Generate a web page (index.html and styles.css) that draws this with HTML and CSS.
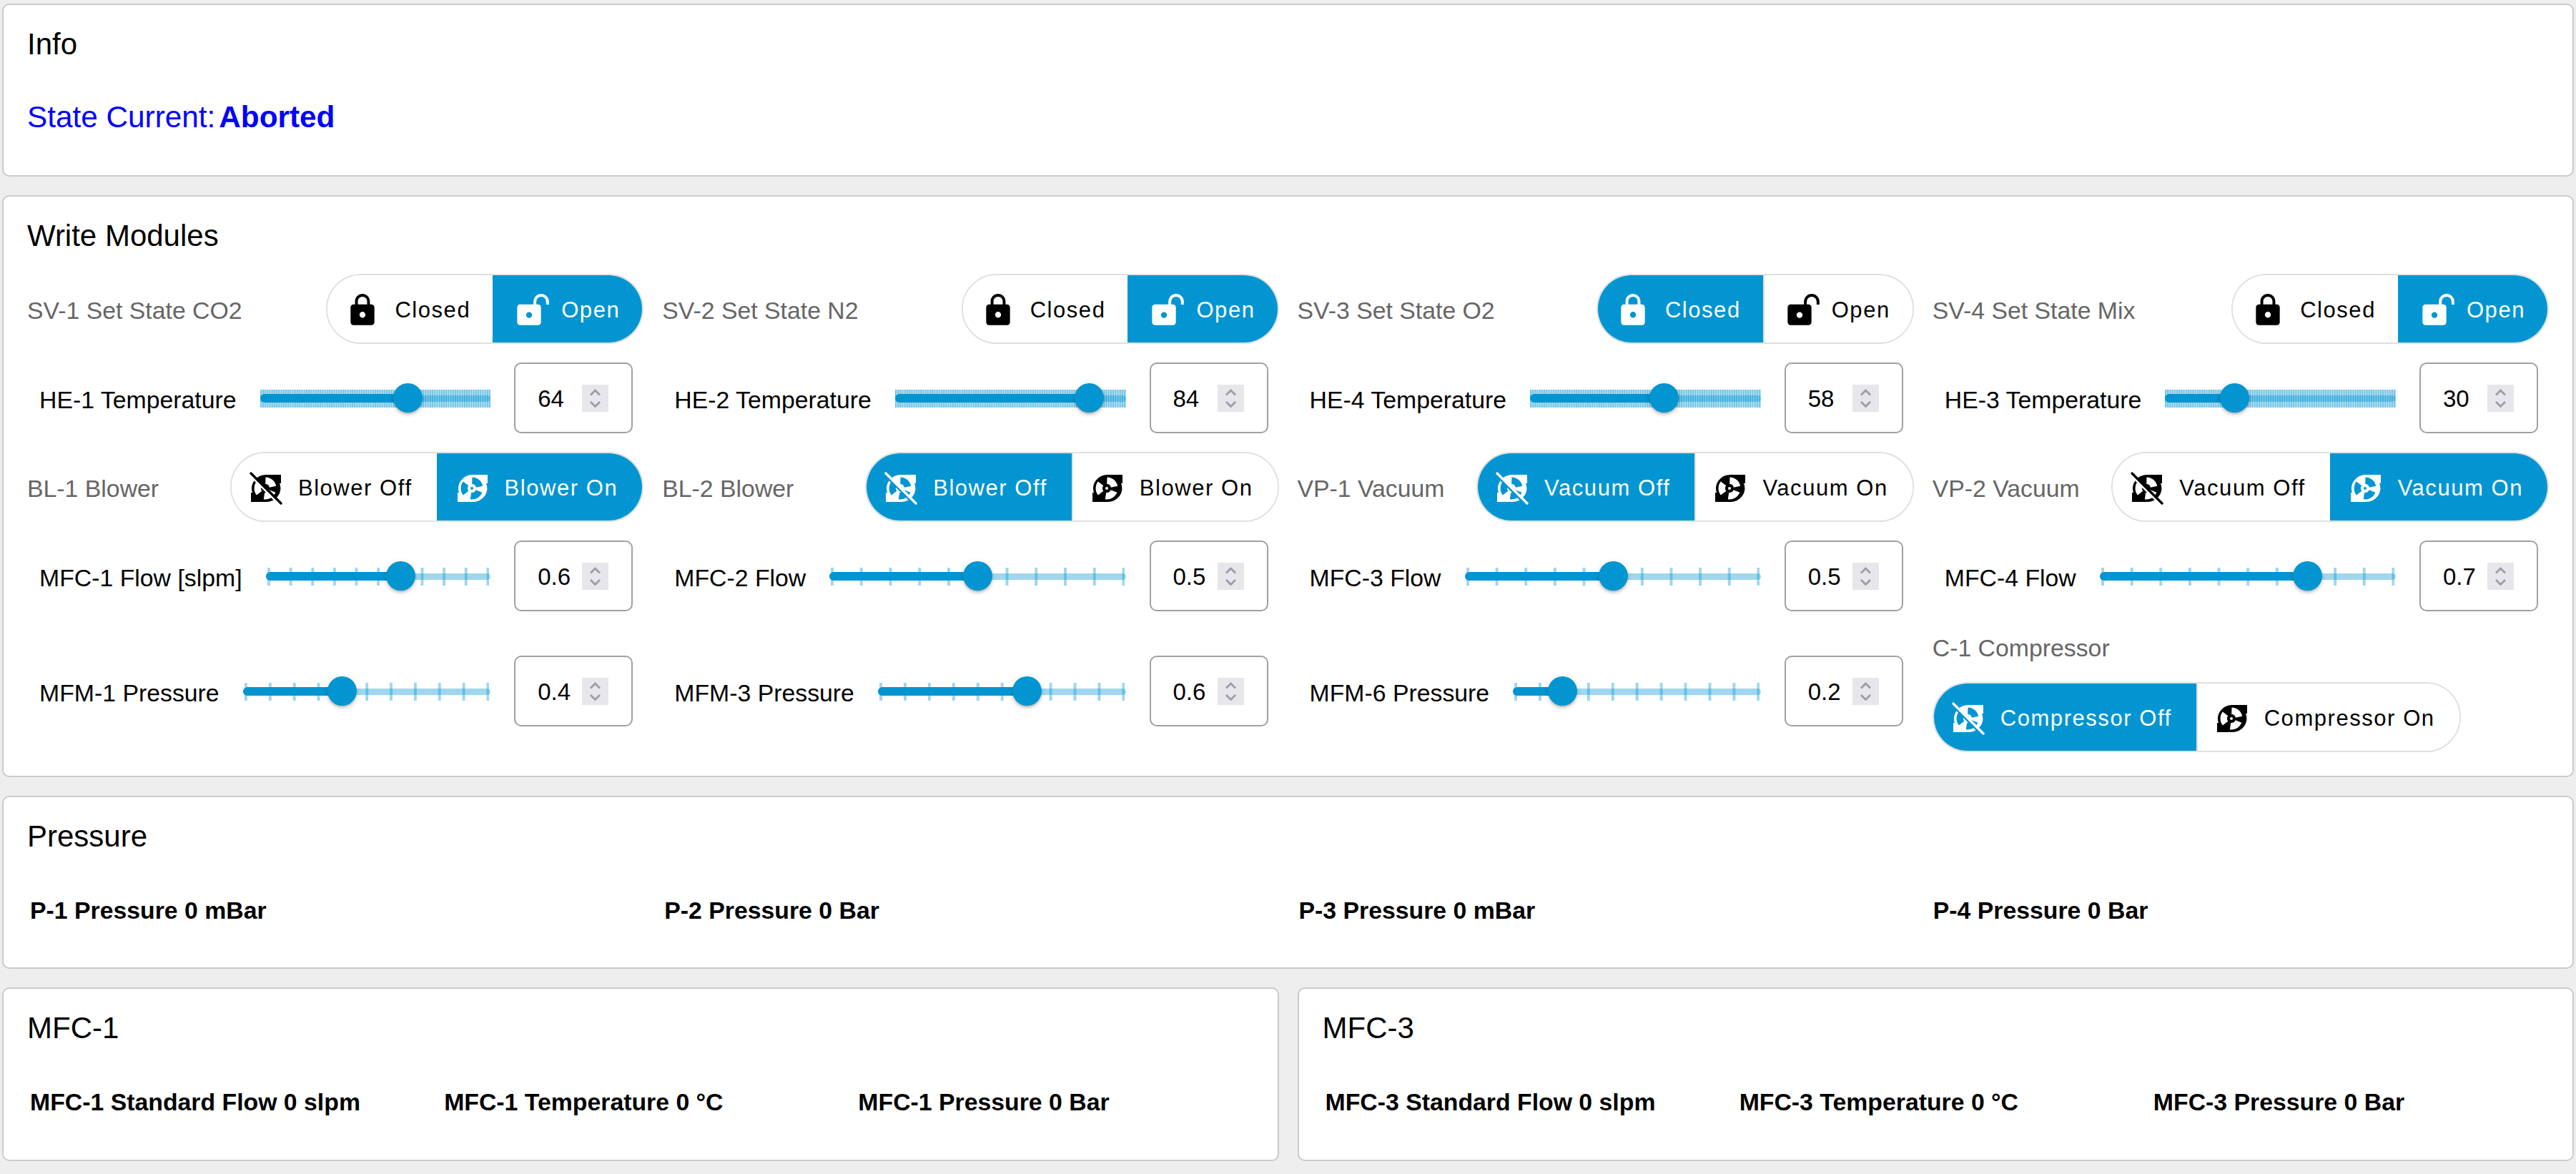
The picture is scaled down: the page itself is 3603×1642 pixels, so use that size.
FILE: index.html
```html
<!DOCTYPE html>
<html lang="en">
<head>
    <meta charset="UTF-8">
    <title>Process Control</title>
    <link rel="stylesheet" href="styles.css">
</head>
<body>
    <svg class="icon-defs" xmlns="http://www.w3.org/2000/svg">
        <symbol id="i-lock" viewBox="0 0 24 24">
            <path d="M18 8h-1V6c0-2.76-2.24-5-5-5S7 3.24 7 6v2H6c-1.1 0-2 .9-2 2v10c0 1.1.9 2 2 2h12c1.1 0 2-.9 2-2V10c0-1.1-.9-2-2-2zm-6 9c-1.1 0-2-.9-2-2s.9-2 2-2 2 .9 2 2-.9 2-2 2zm3.1-9H8.9V6c0-1.71 1.39-3.1 3.1-3.1 1.71 0 3.1 1.39 3.1 3.1v2z"/>
        </symbol>
        <symbol id="i-lock-open" viewBox="0 0 24 24" overflow="visible">
            <path fill-rule="evenodd" d="M6 8h12a2 2 0 0 1 2 2v10a2 2 0 0 1-2 2H6a2 2 0 0 1-2-2V10a2 2 0 0 1 2-2zm6 5.2a2 2 0 1 0 0 4 2 2 0 0 0 0-4z"/>
            <path class="shackle" d="M15.9 8.5V6.2a4.25 4.25 0 0 1 8.5 0V8.2"/>
        </symbol>
        <symbol id="i-fan" viewBox="-3 -5 48 48">
            <path fill-rule="evenodd" d="M21 0H42V12H40A20 19 0 0 1 21 38H0V25H2A20 19 0 0 1 21 0ZM20.5 3.5A15.5 15.5 0 0 1 35.2 15.8L25.9 17.8A6 6 0 0 0 20.2 13ZM34.4 24.8A15.5 15.5 0 0 1 17.8 34.3L19.2 24.9A6 6 0 0 0 25.6 21.2ZM7.8 28.5A15.5 15.5 0 0 1 7.8 9.5L15.3 15.3A6 6 0 0 0 15.3 22.7ZM18 19a2 2 0 1 0 4 0a2 2 0 1 0-4 0Z"/>
        </symbol>
        <symbol id="i-fan-off" viewBox="-3 -5 48 48">
            <path fill-rule="evenodd" d="M21 0H42V12H40A20 19 0 0 1 21 38H0V25H2A20 19 0 0 1 21 0ZM20.5 3.5A15.5 15.5 0 0 1 35.2 15.8L25.9 17.8A6 6 0 0 0 20.2 13ZM34.4 24.8A15.5 15.5 0 0 1 17.8 34.3L19.2 24.9A6 6 0 0 0 25.6 21.2ZM7.8 28.5A15.5 15.5 0 0 1 7.8 9.5L15.3 15.3A6 6 0 0 0 15.3 22.7ZM18 19a2 2 0 1 0 4 0a2 2 0 1 0-4 0Z"/>
            <path class="slash-gap" d="M-2 0L40 42"/>
            <path class="slash" d="M0 -2L42 40"/>
        </symbol>
        <symbol id="i-spin" viewBox="0 0 15 26">
            <path class="chevrons" d="M1 8.5L7.5 2L14 8.5M1 18L7.5 24.5L14 18"/>
        </symbol>
    </svg>

    <section class="card card-readout">
        <h2 class="card-title">Info</h2>
        <div class="state-line"><span>State Current:</span><b>Aborted</b></div>
    </section>

    <section class="card card-modules">
        <h2 class="card-title">Write Modules</h2>
        <div class="module-grid">
            <div class="toggle-row">
                <span class="toggle-label">SV-1 Set State CO2</span>
                <div class="toggle toggle-lock">
                    <span class="toggle-btn"><svg class="icon-lock"><use href="#i-lock"/></svg>Closed</span>
                    <span class="toggle-btn selected"><svg class="icon-lock"><use href="#i-lock-open"/></svg>Open</span>
                </div>
            </div>
            <div class="toggle-row">
                <span class="toggle-label">SV-2 Set State N2</span>
                <div class="toggle toggle-lock">
                    <span class="toggle-btn"><svg class="icon-lock"><use href="#i-lock"/></svg>Closed</span>
                    <span class="toggle-btn selected"><svg class="icon-lock"><use href="#i-lock-open"/></svg>Open</span>
                </div>
            </div>
            <div class="toggle-row">
                <span class="toggle-label">SV-3 Set State O2</span>
                <div class="toggle toggle-lock">
                    <span class="toggle-btn selected"><svg class="icon-lock"><use href="#i-lock"/></svg>Closed</span>
                    <span class="toggle-btn"><svg class="icon-lock"><use href="#i-lock-open"/></svg>Open</span>
                </div>
            </div>
            <div class="toggle-row">
                <span class="toggle-label">SV-4 Set State Mix</span>
                <div class="toggle toggle-lock">
                    <span class="toggle-btn"><svg class="icon-lock"><use href="#i-lock"/></svg>Closed</span>
                    <span class="toggle-btn selected"><svg class="icon-lock"><use href="#i-lock-open"/></svg>Open</span>
                </div>
            </div>

            <div class="slider-row">
                <span class="slider-label">HE-1 Temperature</span>
                <div class="slider slider-dense" style="--value:64%"><span class="rail"></span><span class="marks"></span><span class="track"></span><span class="thumb"></span></div>
                <div class="num-field"><span class="num-value">64</span><span class="num-spin"><svg><use href="#i-spin"/></svg></span></div>
            </div>
            <div class="slider-row">
                <span class="slider-label">HE-2 Temperature</span>
                <div class="slider slider-dense" style="--value:84%"><span class="rail"></span><span class="marks"></span><span class="track"></span><span class="thumb"></span></div>
                <div class="num-field"><span class="num-value">84</span><span class="num-spin"><svg><use href="#i-spin"/></svg></span></div>
            </div>
            <div class="slider-row">
                <span class="slider-label">HE-4 Temperature</span>
                <div class="slider slider-dense" style="--value:58%"><span class="rail"></span><span class="marks"></span><span class="track"></span><span class="thumb"></span></div>
                <div class="num-field"><span class="num-value">58</span><span class="num-spin"><svg><use href="#i-spin"/></svg></span></div>
            </div>
            <div class="slider-row">
                <span class="slider-label">HE-3 Temperature</span>
                <div class="slider slider-dense" style="--value:30%"><span class="rail"></span><span class="marks"></span><span class="track"></span><span class="thumb"></span></div>
                <div class="num-field"><span class="num-value">30</span><span class="num-spin"><svg><use href="#i-spin"/></svg></span></div>
            </div>

            <div class="toggle-row">
                <span class="toggle-label">BL-1 Blower</span>
                <div class="toggle">
                    <span class="toggle-btn"><svg class="icon-fan"><use href="#i-fan-off"/></svg>Blower Off</span>
                    <span class="toggle-btn selected"><svg class="icon-fan"><use href="#i-fan"/></svg>Blower On</span>
                </div>
            </div>
            <div class="toggle-row">
                <span class="toggle-label">BL-2 Blower</span>
                <div class="toggle">
                    <span class="toggle-btn selected"><svg class="icon-fan"><use href="#i-fan-off"/></svg>Blower Off</span>
                    <span class="toggle-btn"><svg class="icon-fan"><use href="#i-fan"/></svg>Blower On</span>
                </div>
            </div>
            <div class="toggle-row">
                <span class="toggle-label">VP-1 Vacuum</span>
                <div class="toggle">
                    <span class="toggle-btn selected"><svg class="icon-fan"><use href="#i-fan-off"/></svg>Vacuum Off</span>
                    <span class="toggle-btn"><svg class="icon-fan"><use href="#i-fan"/></svg>Vacuum On</span>
                </div>
            </div>
            <div class="toggle-row">
                <span class="toggle-label">VP-2 Vacuum</span>
                <div class="toggle">
                    <span class="toggle-btn"><svg class="icon-fan"><use href="#i-fan-off"/></svg>Vacuum Off</span>
                    <span class="toggle-btn selected"><svg class="icon-fan"><use href="#i-fan"/></svg>Vacuum On</span>
                </div>
            </div>

            <div class="slider-row">
                <span class="slider-label">MFC-1 Flow [slpm]</span>
                <div class="slider" style="--value:60%"><span class="rail"></span><span class="marks"></span><span class="track"></span><span class="thumb"></span></div>
                <div class="num-field"><span class="num-value">0.6</span><span class="num-spin"><svg><use href="#i-spin"/></svg></span></div>
            </div>
            <div class="slider-row">
                <span class="slider-label">MFC-2 Flow</span>
                <div class="slider" style="--value:50%"><span class="rail"></span><span class="marks"></span><span class="track"></span><span class="thumb"></span></div>
                <div class="num-field"><span class="num-value">0.5</span><span class="num-spin"><svg><use href="#i-spin"/></svg></span></div>
            </div>
            <div class="slider-row">
                <span class="slider-label">MFC-3 Flow</span>
                <div class="slider" style="--value:50%"><span class="rail"></span><span class="marks"></span><span class="track"></span><span class="thumb"></span></div>
                <div class="num-field"><span class="num-value">0.5</span><span class="num-spin"><svg><use href="#i-spin"/></svg></span></div>
            </div>
            <div class="slider-row">
                <span class="slider-label">MFC-4 Flow</span>
                <div class="slider" style="--value:70%"><span class="rail"></span><span class="marks"></span><span class="track"></span><span class="thumb"></span></div>
                <div class="num-field"><span class="num-value">0.7</span><span class="num-spin"><svg><use href="#i-spin"/></svg></span></div>
            </div>

            <div class="slider-row">
                <span class="slider-label">MFM-1 Pressure</span>
                <div class="slider" style="--value:40%"><span class="rail"></span><span class="marks"></span><span class="track"></span><span class="thumb"></span></div>
                <div class="num-field"><span class="num-value">0.4</span><span class="num-spin"><svg><use href="#i-spin"/></svg></span></div>
            </div>
            <div class="slider-row">
                <span class="slider-label">MFM-3 Pressure</span>
                <div class="slider" style="--value:60%"><span class="rail"></span><span class="marks"></span><span class="track"></span><span class="thumb"></span></div>
                <div class="num-field"><span class="num-value">0.6</span><span class="num-spin"><svg><use href="#i-spin"/></svg></span></div>
            </div>
            <div class="slider-row">
                <span class="slider-label">MFM-6 Pressure</span>
                <div class="slider" style="--value:20%"><span class="rail"></span><span class="marks"></span><span class="track"></span><span class="thumb"></span></div>
                <div class="num-field"><span class="num-value">0.2</span><span class="num-spin"><svg><use href="#i-spin"/></svg></span></div>
            </div>
            <div class="toggle-stack">
                <span class="toggle-label">C-1 Compressor</span>
                <div class="toggle">
                    <span class="toggle-btn selected"><svg class="icon-fan"><use href="#i-fan-off"/></svg>Compressor Off</span>
                    <span class="toggle-btn"><svg class="icon-fan"><use href="#i-fan"/></svg>Compressor On</span>
                </div>
            </div>
        </div>
    </section>

    <section class="card card-readout">
        <h2 class="card-title">Pressure</h2>
        <div class="readings readings-four">
            <span>P-1 Pressure 0 mBar</span>
            <span>P-2 Pressure 0 Bar</span>
            <span>P-3 Pressure 0 mBar</span>
            <span>P-4 Pressure 0 Bar</span>
        </div>
    </section>

    <div class="card-pair">
        <section class="card card-readout">
            <h2 class="card-title">MFC-1</h2>
            <div class="readings readings-three">
                <span>MFC-1 Standard Flow 0 slpm</span>
                <span>MFC-1 Temperature 0 °C</span>
                <span>MFC-1 Pressure 0 Bar</span>
            </div>
        </section>
        <section class="card card-readout">
            <h2 class="card-title">MFC-3</h2>
            <div class="readings readings-three">
                <span>MFC-3 Standard Flow 0 slpm</span>
                <span>MFC-3 Temperature 0 °C</span>
                <span>MFC-3 Pressure 0 Bar</span>
            </div>
        </section>
    </div>
</body>
</html>
```

FILE: styles.css
```css
* {
    box-sizing: border-box;
}
html, body {
    height: 100%;
}
body {
    margin: 0;
    padding: 5px 3px 18px;
    background-color: #eeeeee;
    color: #000;
    font-family: "Liberation Sans", Arial, sans-serif;
    display: flex;
    flex-direction: column;
    gap: 26px;
}
.icon-defs {
    position: absolute;
    width: 0;
    height: 0;
}
.shackle {
    fill: none;
    stroke: currentColor;
    stroke-width: 1.9;
}
.slash {
    stroke: currentColor;
    stroke-width: 3.4;
    stroke-linecap: round;
}
.slash-gap {
    stroke: var(--btn-bg);
    stroke-width: 2.6;
}
.chevrons {
    fill: none;
    stroke: #9c9ca8;
    stroke-width: 2.8;
}

/* cards */
.card {
    background-color: #fff;
    border: 2px solid #cbcbcb;
    border-radius: 10px;
    padding: 28px 33px;
}
.card-readout {
    height: 243px;
}
.card-modules {
    padding-bottom: 33px;
}
.card-title {
    margin: 0;
    padding-top: 3px;
    font-size: 42px;
    line-height: 47px;
    font-weight: 400;
}
.card-modules .card-title {
    margin-bottom: 30px;
}
.card-pair {
    display: grid;
    grid-template-columns: 1fr 1fr;
    gap: 26px;
}

/* info + readings */
.state-line {
    display: flex;
    gap: 5px;
    margin-top: 54px;
    color: #0000ff;
    font-size: 42.3px;
    line-height: 50px;
}
.readings {
    display: grid;
    column-gap: 26px;
    margin-top: 57px;
    padding-left: 4px;
    font-size: 33.8px;
    line-height: 46px;
    font-weight: 700;
}
.readings-four {
    grid-template-columns: repeat(4, 1fr);
}
.readings-three {
    grid-template-columns: repeat(3, 1fr);
}

/* module grid */
.module-grid {
    display: grid;
    grid-template-columns: repeat(4, 1fr);
    gap: 26px;
    align-items: center;
}
.toggle-row {
    display: flex;
    justify-content: space-between;
    align-items: center;
}
.toggle-stack {
    display: flex;
    flex-direction: column;
    align-items: flex-start;
    gap: 27px;
}
.toggle-label {
    padding-top: 4px;
    color: #666;
    font-size: 33.8px;
    line-height: 42px;
}
.toggle {
    display: inline-flex;
    height: 98px;
    border: 2px solid #e0e0e0;
    border-radius: 49px;
    overflow: hidden;
}
.toggle-btn {
    --btn-bg: #fff;
    display: flex;
    align-items: center;
    padding: 4px 34px 0 24px;
    gap: 21px;
    background-color: var(--btn-bg);
    font-size: 31px;
    letter-spacing: 0.05em;
    white-space: nowrap;
}
.toggle-lock .toggle-btn {
    padding-right: 31px;
    gap: 20px;
}
.toggle-btn + .toggle-btn {
    border-left: 2px solid #e0e0e0;
}
.toggle-btn.selected {
    --btn-bg: #0295d1;
    color: #fff;
    border-color: #0295d1;
}
.toggle-btn svg {
    fill: currentColor;
    flex: none;
    overflow: visible;
}
.icon-lock {
    width: 50px;
    height: 50px;
}
.icon-fan {
    width: 48px;
    height: 48px;
}

/* slider + number field */
.slider-row {
    display: flex;
    align-items: center;
    gap: 33px;
    padding: 0 15px 0 17px;
}
.slider-label {
    padding-top: 4px;
    font-size: 33.8px;
    line-height: 42px;
    white-space: nowrap;
}
.slider {
    --steps: 10;
    --tick: 3.5px;
    position: relative;
    flex: 1;
    height: 42px;
}
.slider-dense {
    --steps: 100;
    --tick: 1.6px;
}
.rail,
.marks,
.track {
    position: absolute;
    left: 0;
}
.rail {
    top: 17px;
    width: 100%;
    height: 9px;
    border-radius: 5px;
    background-color: rgba(2, 149, 209, 0.38);
}
.marks {
    top: 9px;
    left: 2px;
    right: 2px;
    height: 25px;
    background-image: linear-gradient(90deg, rgba(2, 149, 209, 0.38) var(--tick), transparent var(--tick));
    background-size: calc((100% - var(--tick)) / var(--steps)) 100%;
    background-repeat: repeat-x;
}
.slider-dense .marks {
    left: 0;
    right: 0;
    background-color: rgba(2, 149, 209, 0.3);
}
.track {
    top: 15px;
    width: var(--value);
    height: 12px;
    border-radius: 6px;
    background-color: #0295d1;
}
.thumb {
    position: absolute;
    top: 0;
    left: var(--value);
    width: 41px;
    height: 41px;
    margin-left: -20px;
    border-radius: 50%;
    background-color: #0295d1;
    box-shadow: 0 3px 3px -2px rgba(0, 0, 0, 0.2), 0 3px 4px rgba(0, 0, 0, 0.14), 0 1px 8px rgba(0, 0, 0, 0.12);
}
.num-field {
    display: flex;
    align-items: center;
    flex: none;
    width: 166px;
    height: 99px;
    padding-left: 31px;
    border: 2px solid #a0a0a0;
    border-radius: 10px;
}
.num-value {
    flex: 1;
    padding-top: 3px;
    font-size: 33px;
}
.num-spin {
    display: flex;
    align-items: center;
    justify-content: center;
    width: 37px;
    height: 38px;
    margin-right: 32px;
    background-color: #e6e6eb;
}
.num-spin svg {
    width: 15px;
    height: 26px;
}
```
